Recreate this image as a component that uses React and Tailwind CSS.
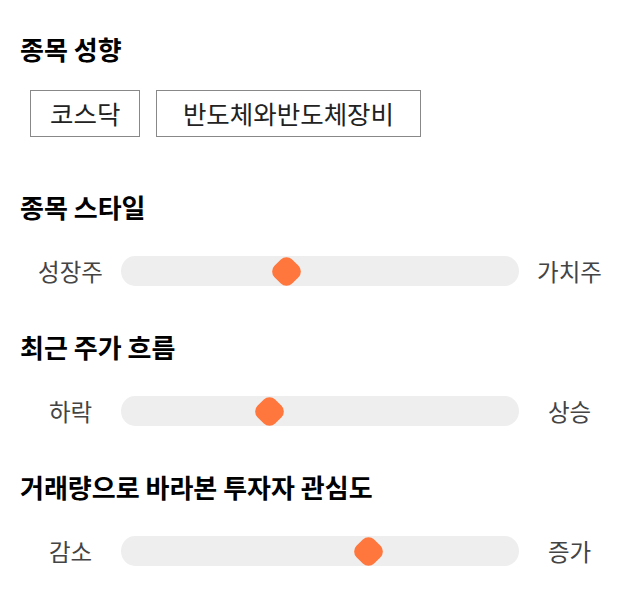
import React from "react";

const font = { fontFamily: '"Noto Sans CJK KR", "Noto Sans", sans-serif' };

function Slider({ left, right, value }) {
  return (
    <div className="flex items-center h-[60px] mt-[18px]">
      <div className="w-[101px] text-center text-[23.5px] leading-[30px] text-[#444]">{left}</div>
      <div className="relative flex-1 h-[30px] bg-[#eeeeee] rounded-[14px/15px]">
        <div
          className="absolute top-1/2 w-[25px] h-[25px] -ml-[12.5px] -mt-[12.5px] bg-[#ff773d] rounded-[8px] rotate-45"
          style={{ left: `${value * 100}%` }}
        />
      </div>
      <div className="w-[101px] text-center text-[23.5px] leading-[30px] text-[#444]">{right}</div>
    </div>
  );
}

export default function App() {
  return (
    <div className="w-[640px] h-[606px] bg-white px-[20px] pt-[33px] text-black overflow-hidden" style={font}>
      <h2 className="text-[26px] font-bold leading-[32px]">종목 성향</h2>
      <div className="flex gap-[16px] mt-[25px] ml-[10px]">
        <div className="border border-[#888] h-[47px] px-[19px] flex items-center text-[25.5px] text-[#222]">코스닥</div>
        <div className="border border-[#888] h-[47px] px-[25.5px] flex items-center text-[25.5px] text-[#222]">반도체와반도체장비</div>
      </div>
      <h2 className="text-[26px] font-bold leading-[32px] mt-[54px]">종목 스타일</h2>
      <Slider left="성장주" right="가치주" value={0.416} />
      <h2 className="text-[26px] font-bold leading-[32px] mt-[30px]">최근 주가 흐름</h2>
      <Slider left="하락" right="상승" value={0.374} />
      <h2 className="text-[26px] font-bold leading-[32px] mt-[30px]">거래량으로 바라본 투자자 관심도</h2>
      <Slider left="감소" right="증가" value={0.622} />
    </div>
  );
}
